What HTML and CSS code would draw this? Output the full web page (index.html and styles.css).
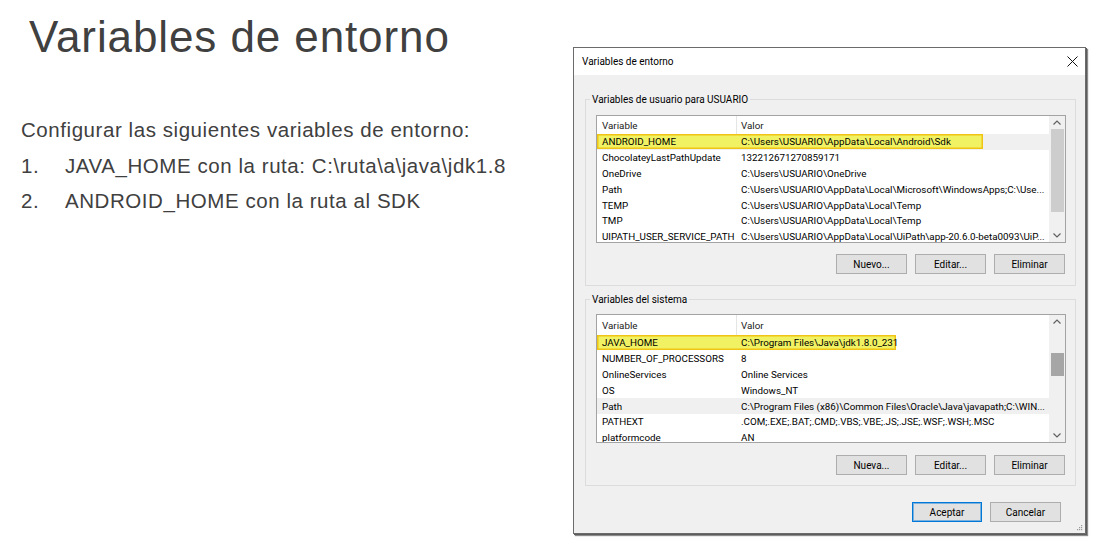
FILE: index.html
```html
<!DOCTYPE html>
<html lang="es">
<head>
<meta charset="utf-8">
<title>Variables de entorno</title>
<link rel="stylesheet" href="styles.css">
</head>
<body>
<main class="slide">
  <section class="slide-text">
    <h1 class="slide-title">Variables de entorno</h1>
    <p class="intro">Configurar las siguientes variables de entorno:</p>
    <ol class="steps">
      <li><span class="num">1.</span><span>JAVA_HOME con la ruta: C:\ruta\a\java\jdk1.8</span></li>
      <li><span class="num">2.</span><span>ANDROID_HOME con la ruta al SDK</span></li>
    </ol>
  </section>

  <div class="dialog">
    <div class="titlebar">
      <span class="title">Variables de entorno</span>
      <svg class="close" width="11" height="11" viewBox="0 0 11 11"><path d="M0.5 0.5 L10.5 10.5 M10.5 0.5 L0.5 10.5" stroke="#111" stroke-width="1" fill="none"/></svg>
    </div>
    <div class="dialog-body">
      <div class="group">
        <span class="group-label">Variables de usuario para USUARIO</span>
        <div class="list list-user">
          <div class="list-main">
            <div class="header"><span class="c1 hc1">Variable</span><span class="c2">Valor</span></div>
            <div class="row cur"><div class="hl" style="width:386px"><span class="c1">ANDROID_HOME</span><span class="c2">C:\Users\USUARIO\AppData\Local\Android\Sdk</span></div></div>
            <div class="row"><span class="c1">ChocolateyLastPathUpdate</span><span class="c2">132212671270859171</span></div>
            <div class="row"><span class="c1">OneDrive</span><span class="c2">C:\Users\USUARIO\OneDrive</span></div>
            <div class="row"><span class="c1">Path</span><span class="c2">C:\Users\USUARIO\AppData\Local\Microsoft\WindowsApps;C:\Use...</span></div>
            <div class="row"><span class="c1">TEMP</span><span class="c2">C:\Users\USUARIO\AppData\Local\Temp</span></div>
            <div class="row"><span class="c1">TMP</span><span class="c2">C:\Users\USUARIO\AppData\Local\Temp</span></div>
            <div class="row"><span class="c1">UIPATH_USER_SERVICE_PATH</span><span class="c2">C:\Users\USUARIO\AppData\Local\UiPath\app-20.6.0-beta0093\UiP...</span></div>
          </div>
          <div class="scroll">
            <div class="arrow"><svg width="8" height="5" viewBox="0 0 8 5"><path d="M0.5 4.5 L4 1 L7.5 4.5" stroke="#606060" stroke-width="1.2" fill="none"/></svg></div>
            <div class="track"><div class="thumb" style="margin-top:0;height:83px"></div></div>
            <div class="arrow"><svg width="8" height="5" viewBox="0 0 8 5"><path d="M0.5 0.5 L4 4 L7.5 0.5" stroke="#606060" stroke-width="1.2" fill="none"/></svg></div>
          </div>
        </div>
        <div class="buttons">
          <button class="btn">Nuevo...</button>
          <button class="btn">Editar...</button>
          <button class="btn">Eliminar</button>
        </div>
      </div>

      <div class="group group-sys">
        <span class="group-label">Variables del sistema</span>
        <div class="list list-sys">
          <div class="list-main">
            <div class="header header-sys"><span class="c1 hc1">Variable</span><span class="c2">Valor</span></div>
            <div class="row"><div class="hl" style="width:299px"><span class="c1">JAVA_HOME</span><span class="c2">C:\Program Files\Java\jdk1.8.0_231</span></div></div>
            <div class="row"><span class="c1">NUMBER_OF_PROCESSORS</span><span class="c2">8</span></div>
            <div class="row"><span class="c1">OnlineServices</span><span class="c2">Online Services</span></div>
            <div class="row"><span class="c1">OS</span><span class="c2">Windows_NT</span></div>
            <div class="row cur"><span class="c1">Path</span><span class="c2">C:\Program Files (x86)\Common Files\Oracle\Java\javapath;C:\WIN...</span></div>
            <div class="row"><span class="c1">PATHEXT</span><span class="c2">.COM;.EXE;.BAT;.CMD;.VBS;.VBE;.JS;.JSE;.WSF;.WSH;.MSC</span></div>
            <div class="row"><span class="c1">platformcode</span><span class="c2">AN</span></div>
          </div>
          <div class="scroll">
            <div class="arrow"><svg width="8" height="5" viewBox="0 0 8 5"><path d="M0.5 4.5 L4 1 L7.5 4.5" stroke="#606060" stroke-width="1.2" fill="none"/></svg></div>
            <div class="track"><div class="thumb thumb-dark" style="margin-top:25px;height:23px"></div></div>
            <div class="arrow"><svg width="8" height="5" viewBox="0 0 8 5"><path d="M0.5 0.5 L4 4 L7.5 0.5" stroke="#606060" stroke-width="1.2" fill="none"/></svg></div>
          </div>
        </div>
        <div class="buttons">
          <button class="btn">Nueva...</button>
          <button class="btn">Editar...</button>
          <button class="btn">Eliminar</button>
        </div>
      </div>

      <div class="footer">
        <button class="btn btn-default">Aceptar</button>
        <button class="btn">Cancelar</button>
      </div>
    </div>
    <svg class="grip" width="7" height="7" viewBox="0 0 7 7">
      <rect x="5" y="1" width="1.2" height="1.2" fill="#9a9a9a"/>
      <rect x="3" y="3" width="1.2" height="1.2" fill="#9a9a9a"/>
      <rect x="5" y="3" width="1.2" height="1.2" fill="#9a9a9a"/>
      <rect x="1" y="5" width="1.2" height="1.2" fill="#9a9a9a"/>
      <rect x="3" y="5" width="1.2" height="1.2" fill="#9a9a9a"/>
      <rect x="5" y="5" width="1.2" height="1.2" fill="#9a9a9a"/>
    </svg>
  </div>
</main>
</body>
</html>
```
FILE: styles.css
```css
html, body {
  margin: 0;
  padding: 0;
  background: #ffffff;
}

.slide {
  display: flex;
  align-items: flex-start;
  width: 1095px;
  height: 540px;
  overflow: hidden;
}

.slide-text {
  flex: 0 0 573px;
  font-family: "Liberation Sans", Arial, sans-serif;
  color: #404040;
}

.slide-title {
  margin: 11px 0 0 29px;
  font-size: 44px;
  font-weight: 400;
  letter-spacing: 0.9px;
  line-height: 52px;
}

.intro {
  margin: 49px 0 0 21px;
  font-size: 20.5px;
  letter-spacing: 0.56px;
  line-height: 35.7px;
}

.steps {
  margin: 0 0 0 21px;
  padding: 0;
  list-style: none;
  font-size: 20.5px;
  letter-spacing: 0.56px;
  line-height: 35.7px;
}

.steps li {
  display: flex;
}

.steps .num {
  flex: 0 0 44px;
}

/* Dialog */
.dialog {
  position: relative;
  margin-top: 47px;
  width: 513px;
  box-sizing: border-box;
  border: 1px solid #6b6b6b;
  box-shadow: 1px 1px 0 #5c5c5c, 2px 2px 1px rgba(0, 0, 0, 0.45);
  background: #f0f0f0;
  font-family: Roboto, "Noto Sans", sans-serif;
  font-size: 10px;
  color: #000;
}

.titlebar {
  height: 27px;
  background: #ffffff;
  display: flex;
  align-items: center;
  justify-content: space-between;
  padding: 0 7px 0 8px;
}

.close {
  display: block;
}

.dialog-body {
  padding: 24px 9px 11px 11px;
}

.group {
  position: relative;
  border: 1px solid #dcdcdc;
  padding: 15px 9px 11px 10px;
}

.group-sys {
  margin-top: 13px;
  padding-top: 14px;
  padding-bottom: 10px;
}

.group-label {
  position: absolute;
  top: -7px;
  left: 4px;
  padding: 0 2px;
  line-height: 13px;
  background: #f0f0f0;
  white-space: nowrap;
}

.list {
  display: flex;
  height: 128px;
  box-sizing: border-box;
  border: 1px solid #a3a3a3;
  background: #ffffff;
  overflow: hidden;
  font-size: 9.8px;
}

.list-sys {
  height: 129px;
}

.list-main {
  flex: 1;
  overflow: hidden;
}

.header {
  display: flex;
  height: 18px;
  align-items: center;
  white-space: nowrap;
  color: #1a1a1a;
}

.header-sys {
  height: 20px;
}

.header .hc1 {
  align-self: stretch;
  display: flex;
  align-items: center;
  border-right: 1px solid #e5e5e5;
  width: 140px;
}

.row {
  display: flex;
  height: 15.8px;
  align-items: center;
  white-space: nowrap;
}

.row.cur {
  background: #f0f0f0;
}

.hl {
  display: flex;
  align-items: center;
  height: 15px;
  flex: 0 0 auto;
  background: #f0f263;
  box-shadow: inset 0 0 0 1.5px #f0c414;
}

.c1 {
  flex: 0 0 140px;
  box-sizing: border-box;
  padding-left: 5px;
  overflow: hidden;
}

.c2 {
  padding-left: 4px;
}

.scroll {
  flex: 0 0 16px;
  display: flex;
  flex-direction: column;
  background: #f0f0f0;
}

.arrow {
  height: 13px;
  display: flex;
  align-items: center;
  justify-content: center;
}

.arrow svg {
  display: block;
}

.track {
  flex: 1;
  display: flex;
  flex-direction: column;
  padding: 0 1px 0 2px;
}

.thumb {
  background: #cdcdcd;
}

.thumb-dark {
  background: #a6a6a6;
}

.buttons {
  display: flex;
  justify-content: flex-end;
  gap: 8px;
  margin-top: 11px;
  margin-right: 1px;
}

.group-sys .buttons {
  margin-top: 12px;
}

.btn {
  width: 71px;
  height: 20px;
  box-sizing: border-box;
  margin: 0;
  padding: 0;
  border: 1px solid #adadad;
  background: #e1e1e1;
  font-family: Roboto, "Noto Sans", sans-serif;
  font-size: 10px;
  color: #000;
}

.btn-default {
  width: 70px;
  border-color: #0078d7;
  box-shadow: inset 0 0 0 1px rgba(0, 120, 215, 0.45);
}

.footer {
  display: flex;
  justify-content: flex-end;
  gap: 8px;
  margin-top: 16px;
  margin-right: 15px;
}

.grip {
  position: absolute;
  right: 2px;
  bottom: 2px;
  display: block;
}
```
